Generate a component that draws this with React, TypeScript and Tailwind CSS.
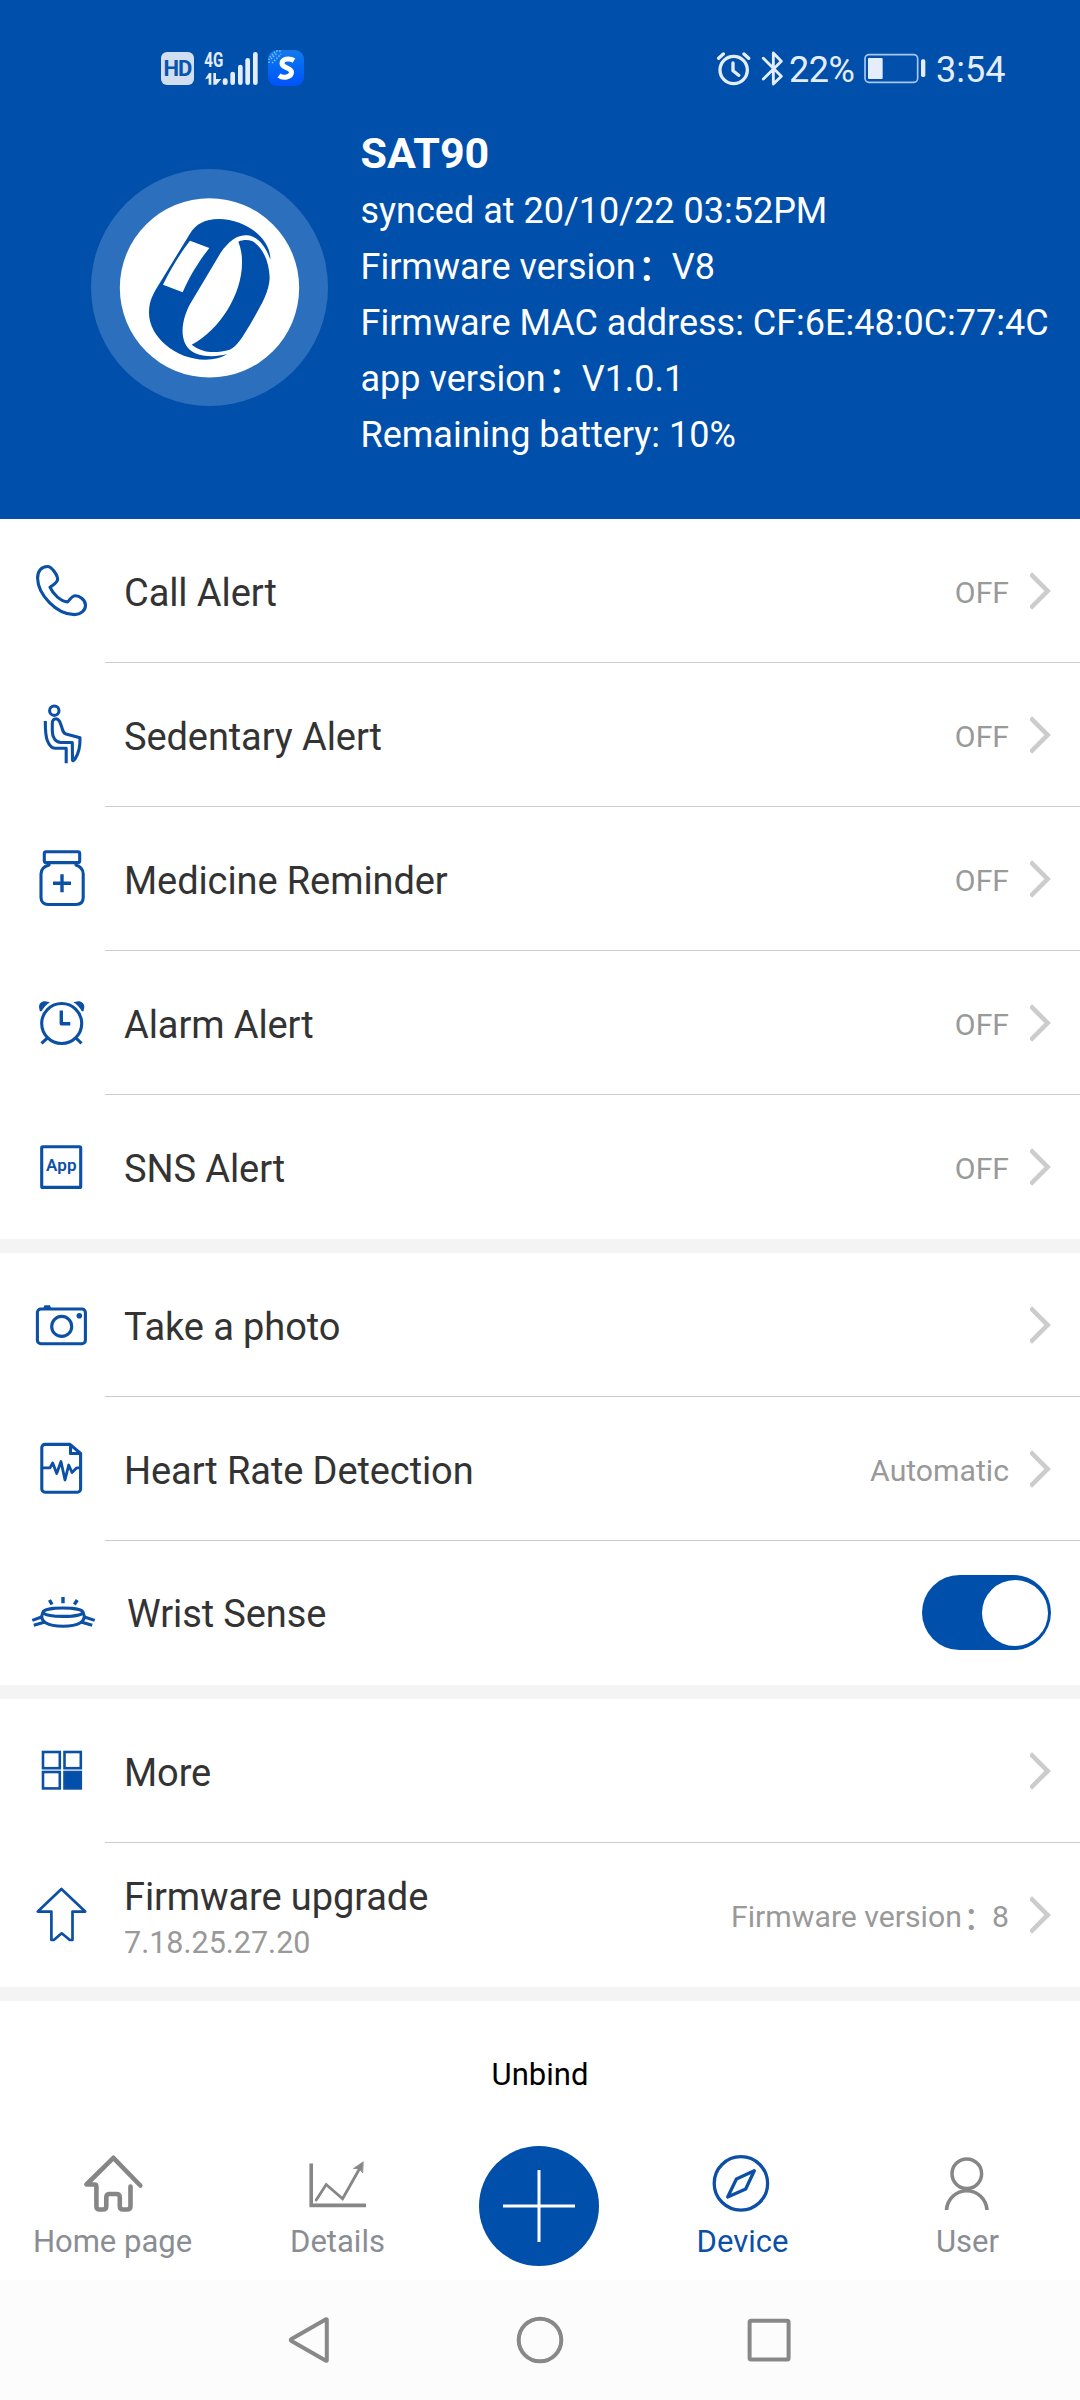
import type { ReactNode } from 'react';

interface MenuItem {
  label: string;
  icon: ReactNode;
  value?: string;
  sub?: string;
  toggle?: boolean;
}

interface TabItem {
  label: string;
  icon: ReactNode;
  active?: boolean;
}

function RowIcon({ children }: { children: ReactNode }) {
  return (
    <svg width="64" height="64" viewBox="0 0 64 64" fill="none" stroke="#0c50a6" strokeWidth="3.1" strokeLinejoin="round" className="shrink-0 overflow-visible">
      {children}
    </svg>
  );
}

const phoneIcon = (
  <RowIcon>
    <path d="M8.6 19.5C8.4 12 12.5 7.5 18.5 7.5C22.5 7.5 28.6 16 28.6 20.3C28.6 23.8 24.5 25.5 21 28.2C24 35.5 32 42.4 38.7 42.9C40.8 41 42.5 36.8 46.5 36.8C50.5 36.8 56.5 41 56.5 46.2C56.5 51.6 51.5 55.6 45.5 55.6C27 55.6 9 35 8.6 19.5Z" />
  </RowIcon>
);

const sittingIcon = (
  <RowIcon>
    <circle cx="25.3" cy="7.7" r="4.7" />
    <path d="M16.3 18C16.3 27 16.5 33 18.3 37.5C20.3 42.5 22.5 45.2 26 45.2H37.2V60.3" />
    <path d="M23.3 28V20C23.3 17.3 25 15.7 27 15.7C30.5 15.7 31.5 20.5 33 25C34 28.5 34.5 30.2 37 31L51 34.8C51.2 42 49.5 51 46 56C45 57.6 43.7 58.3 43.5 57L43.3 39.5H32C26.5 39.5 23.3 34.5 23.3 28Z" />
  </RowIcon>
);

const medicineIcon = (
  <RowIcon>
    <rect x="15.3" y="4.8" width="35.4" height="10.8" rx="1.8" />
    <path d="M20 16V18C14.5 19.5 12 22.5 12 27V50.5C12 55 15 57.5 19 57.5H47C51.5 57.5 54.2 55 54.2 50.5V27C54.2 22.5 51.5 19.5 47 18V16" />
    <path d="M33 27.3V45.3M24 36.3H42" strokeWidth="3.4" />
  </RowIcon>
);

const alarmIcon = (
  <RowIcon>
    <circle cx="32.7" cy="32.5" r="20" />
    <path d="M32.3 19.5V32.7H41.3" strokeWidth="3.4" />
    <path d="M19 46.5L12.5 52.3M46.4 46.5L52.5 52.3" />
    <path d="M21 11.2L16 10.3C12 10.3 10 12.8 10 16L10.8 20.3H12.6C14.5 16.5 17.5 13.5 21 11.2ZM44.4 11.2L49 10.3C53 10.3 55.3 12.8 55.3 16L54.5 20.3H52.8C51 16.5 48 13.5 44.4 11.2Z" fill="#0c50a6" stroke="none" />
  </RowIcon>
);

const appIcon = (
  <RowIcon>
    <rect x="12.7" y="11.8" width="39" height="40.6" rx="1" />
    <text x="17" y="35.7" fontSize="17" fontWeight="600" textLength="30.5" fill="#0c50a6" stroke="none" className="font-[Roboto,sans-serif]">
      App
    </text>
  </RowIcon>
);

const cameraIcon = (
  <RowIcon>
    <rect x="8.4" y="16" width="48" height="34.7" rx="3.5" />
    <path d="M14 16L15.5 12.3H21L22.5 16Z" fill="#0c50a6" stroke="none" />
    <circle cx="32.7" cy="33.4" r="10" />
    <circle cx="50.3" cy="22.7" r="2.8" fill="#0c50a6" stroke="none" />
  </RowIcon>
);

const heartRateIcon = (
  <RowIcon>
    <path d="M41 7.4H16A3.2 3.2 0 0 0 12.8 10.6V52A3.2 3.2 0 0 0 16 55.2H48.4A3.2 3.2 0 0 0 51.6 52V16.5Z" />
    <path d="M41.5 7.5V16.5H51.6" />
    <path d="M13 30.9H21L23.7 26L27.7 36.5L32 24.5L36 43L39.7 28L43 35.5L47.5 30.9H51.5" strokeWidth="2.8" />
  </RowIcon>
);

const wristIcon = (
  <RowIcon>
    <ellipse cx="34" cy="31.2" rx="20" ry="4.2" />
    <path d="M14 31.5C11.5 36 13 39.5 17 42C24 46.3 44 46.3 51 42C55 39.5 56.5 36 54 31.5" />
    <path d="M3.3 39.4L12.5 36M4.8 44.3L16 41M65.7 39.4L55.5 36M63.2 44.3L52 41" />
    <path d="M34 16V22.2M20.5 19L23 23.5M48.3 19L45.3 23.5" strokeWidth="3.4" />
  </RowIcon>
);

const moreIcon = (
  <RowIcon>
    <g strokeWidth="2.6" strokeLinejoin="miter">
      <rect x="14" y="13" width="16.8" height="16.2" />
      <rect x="35.5" y="13" width="16.3" height="16.2" />
      <rect x="14" y="33" width="16.8" height="16.4" />
      <rect x="35.5" y="33" width="16.3" height="16.4" fill="#004fab" />
    </g>
  </RowIcon>
);

const upgradeIcon = (
  <RowIcon>
    <path d="M32.4 6L56.2 28.6H43.5V57H40.8L32.7 50.3L24.8 57H22.4V28.6H8.8Z" strokeWidth="2.7" />
  </RowIcon>
);

const groups: MenuItem[][] = [
  [
    { label: 'Call Alert', icon: phoneIcon, value: 'OFF' },
    { label: 'Sedentary Alert', icon: sittingIcon, value: 'OFF' },
    { label: 'Medicine Reminder', icon: medicineIcon, value: 'OFF' },
    { label: 'Alarm Alert', icon: alarmIcon, value: 'OFF' },
    { label: 'SNS Alert', icon: appIcon, value: 'OFF' },
  ],
  [
    { label: 'Take a photo', icon: cameraIcon },
    { label: 'Heart Rate Detection', icon: heartRateIcon, value: 'Automatic' },
    { label: 'Wrist Sense', icon: wristIcon, toggle: true },
  ],
  [
    { label: 'More', icon: moreIcon },
    { label: 'Firmware upgrade', icon: upgradeIcon, sub: '7.18.25.27.20', value: 'Firmware version：8' },
  ],
];

const deviceInfo = [
  'synced at 20/10/22 03:52PM',
  'Firmware version：V8',
  'Firmware MAC address: CF:6E:48:0C:77:4C',
  'app version：V1.0.1',
  'Remaining battery: 10%',
];

const leftTabs: TabItem[] = [
  {
    label: 'Home page',
    icon: (
      <path d="M59.3 35.5L32.4 7.8L5.4 34.5H13.4Q15.4 34.5 15.4 36.5V56Q15.4 59.5 18.5 59.5H22Q25.3 59.5 25.3 56V47.5Q25.3 44 28.5 44H35.5Q38.8 44 38.8 47.5V56Q38.8 59.5 42 59.5H46Q49.5 59.5 49.5 56V36.5" strokeWidth="4.6" />
    ),
  },
  {
    label: 'Details',
    icon: (
      <>
        <path d="M5.2 13.5V55.4H60" strokeWidth="3.6" strokeLinejoin="miter" strokeLinecap="butt" />
        <path d="M10.2 50L20.2 34.5L36.6 48.8L54.5 17" strokeWidth="2.8" strokeLinejoin="miter" />
        <path d="M57 12L47.5 18.5L53 18.5L56.5 22.5Z" fill="currentColor" strokeWidth="0.8" />
      </>
    ),
  },
];

const rightTabs: TabItem[] = [
  {
    label: 'Device',
    active: true,
    icon: (
      <>
        <circle cx="29.9" cy="33.4" r="26.7" strokeWidth="3.3" />
        <path d="M43.3 20.7L25.4 29L16.7 47L34.7 39Z" strokeWidth="3.3" />
      </>
    ),
  },
  {
    label: 'User',
    icon: (
      <>
        <circle cx="30.8" cy="23.7" r="14.8" strokeWidth="3.5" />
        <path d="M10.5 60A20.3 20.7 0 0 1 51 60" strokeWidth="3.6" strokeLinecap="butt" />
      </>
    ),
  },
];

// The full-width colon sits a little too high and left next to Roboto
function WithColon({ text }: { text: string }) {
  const [before, after] = text.split('：');
  if (after === undefined) return <>{text}</>;
  return (
    <>
      {before}
      <span className="relative top-[2px] left-[2px] font-medium">：</span>
      {after}
    </>
  );
}

function StatusBar() {
  return (
    <div className="flex h-[124px] items-center pt-3 text-[#e4edf9]">
      <div className="ml-[161px] flex h-[33px] w-[33px] items-center justify-center rounded-md bg-[#d0def0] text-[22px] font-bold tracking-[-1px] text-[#0a54ad]">
        HD
      </div>
      <svg width="57" height="38" viewBox="190 54 171 114" className="ml-[9px]" fill="currentColor">
        <text x="194" y="108" fontSize="62" fontWeight="700" textLength="57" lengthAdjust="spacingAndGlyphs">
          4G
        </text>
        <path d="M196 145L208 126H215V161H207V142ZM221 126H229V144H245L230 161H221Z" />
        <rect x="249" y="142" width="15" height="20" rx="7" />
        <rect x="272" y="122" width="14" height="40" rx="7" />
        <rect x="295" y="101" width="14" height="61" rx="7" />
        <rect x="317" y="81" width="14" height="81" rx="7" />
        <rect x="340" y="63" width="14" height="99" rx="7" />
      </svg>
      <div className="ml-2 flex h-9 w-9 items-center justify-center rounded-[9px] bg-linear-to-b from-[#1479ec] to-[#0352fb]">
        <svg width="36" height="36" viewBox="0 0 36 36">
          <path d="M1 13L1 8L8 1H14M4 13L13 4M3 9L9 3" stroke="#7fc0f5" strokeWidth="1.5" strokeDasharray="1.5 1.5" fill="none" />
          <path d="M26 10.5C21 7.5 14 9 14 13.5C14 18.5 24 17 23.5 22.5C23 27.5 15 28.5 11 25.5" stroke="#fff" strokeWidth="5" fill="none" />
        </svg>
      </div>
      <svg width="35" height="36" viewBox="78 60 105 108" fill="none" stroke="currentColor" strokeWidth="10" strokeLinecap="round" strokeLinejoin="round" className="ml-[412px]">
        <circle cx="131" cy="120" r="41" />
        <path d="M129 99V122L146 136M86 85L100 72M176 85L162 72" />
      </svg>
      <svg width="25" height="36" viewBox="210 60 75 108" fill="none" stroke="currentColor" strokeWidth="8.5" strokeLinecap="round" strokeLinejoin="round" className="ml-[9px]">
        <path d="M220 85L274 139L250 162V69L274 94L220 147" />
      </svg>
      <span className="ml-1 w-[74px] pt-[3px] text-[36px] leading-10 tracking-[-0.5px]">22%</span>
      <svg width="64" height="36" viewBox="520 60 192 108" fill="currentColor">
        <rect x="526" y="74" width="158" height="83" rx="12" fill="none" stroke="#a9c8f0" strokeWidth="5" />
        <rect x="535" y="84" width="44" height="63" rx="3" />
        <rect x="694" y="88" width="13" height="53" rx="5" />
      </svg>
      <span className="ml-[9px] pt-[3px] text-[36px] leading-10">3:54</span>
    </div>
  );
}

function BandLogo() {
  return (
    <svg width="237" height="237" viewBox="32 28 711 711" className="mt-[45px] ml-[90.5px] shrink-0">
      <circle cx="387.5" cy="383.5" r="355.5" fill="#2c6fbc" />
      <circle cx="387.5" cy="384.5" r="269" fill="#fff" />
      <g fill="#004fab">
        <path d="M570 300C572 240 500 178 415 178C375 178 347 192 327 225L226 390C211 416 206 435 206 460C206 530 285 600 375 600C400 600 425 594 440 583C400 594 350 592 326 568C298 540 302 485 328 435L420 281C446 242 472 226 500 227C535 230 558 265 570 300Z" />
        <path d="M474 246C490 240 502 240 517 245C550 265 567 310 568 355C566 400 540 440 512 490C485 535 470 560 448 570C405 582 365 580 334 555C420 510 487 400 485 305C485 280 480 262 474 246Z" />
      </g>
      <path d="M329 243L387 265C355 305 325 355 307 398L248 375C270 330 300 280 329 243Z" fill="#fff" />
    </svg>
  );
}

function MenuRow({ item, last }: { item: MenuItem; last: boolean }) {
  return (
    <div className="flex h-36 items-center">
      <div className="flex w-[105px] shrink-0 pl-[29px]">{item.icon}</div>
      <div className={`flex h-full flex-1 items-center justify-between pr-[28px] ${last ? '' : 'border-b border-[#cccccc]'}`}>
        <div className={item.toggle ? 'pt-[2px] pl-[22px]' : item.sub ? 'pt-2 pl-[19px]' : 'pt-1 pl-[19px]'}>
          <div className={`text-[38px] tracking-[-0.1px] text-[#333333] ${item.sub ? 'leading-[46px]' : 'leading-[50px]'}`}>{item.label}</div>
          {item.sub && <div className="text-[30.5px] leading-[45px] text-[#999999]">{item.sub}</div>}
        </div>
        {item.toggle ? (
          <div className="mr-px mb-px flex h-[75px] w-[129px] items-center justify-end rounded-full bg-[#004fab] pr-[3px]">
            <div className="size-[66px] rounded-full bg-white" />
          </div>
        ) : (
          <div className="flex items-center">
            <span className="pt-1 text-[30.2px] leading-10 text-[#999999]">
              <WithColon text={item.value ?? ''} />
            </span>
            <svg width="22" height="40" viewBox="0 0 22 40" fill="none" stroke="#cccccc" strokeWidth="4.6" className="ml-[21px]">
              <path d="M0.5 2.8L17.7 20L0.5 37.2" />
            </svg>
          </div>
        )}
      </div>
    </div>
  );
}

function Tab({ label, icon, active }: TabItem) {
  return (
    <div className={`flex w-[225px] flex-col items-center pt-1 ${active ? 'text-[#0c50a6]' : 'text-[#868686]'}`}>
      <svg width="64" height="64" viewBox="0 0 64 64" fill="none" stroke="currentColor" strokeLinecap="round" strokeLinejoin="round">
        {icon}
      </svg>
      <span className={`mt-2 text-[31px] leading-10 ${active ? '' : 'text-[#8a8d93]'}`}>{label}</span>
    </div>
  );
}

export default function App() {
  return (
    <div className="flex h-[2400px] w-[1080px] flex-col overflow-hidden bg-white font-[Roboto,'Noto_Sans_CJK_SC',sans-serif]">
      <header className="h-[519px] bg-[#004fab] text-white">
        <StatusBar />
        <div className="flex">
          <BandLogo />
          <div className="ml-[33px] whitespace-nowrap">
            <h1 className="text-[43px] leading-[59px] font-bold">SAT90</h1>
            {deviceInfo.map((line) => (
              <p key={line} className="h-14 text-[36px] leading-14">
                <WithColon text={line} />
              </p>
            ))}
          </div>
        </div>
      </header>

      <main>
        {groups.map((items, i) => (
          <section key={i} className="border-b-[14px] border-[#f4f4f4]">
            {items.map((item, j) => (
              <MenuRow key={item.label} item={item} last={j === items.length - 1} />
            ))}
          </section>
        ))}
        <button className="flex h-[145px] w-full items-center justify-center pt-1 text-[31px] text-black">Unbind</button>
      </main>

      <nav className="flex h-[134px] items-start">
        {leftTabs.map((tab) => (
          <Tab key={tab.label} {...tab} />
        ))}
        <div className="w-[180px] pl-[29px]">
          <div className="flex size-[120px] items-center justify-center rounded-full bg-[#004fab]">
            <svg width="72" height="72" viewBox="0 0 72 72" stroke="#fff" strokeWidth="3">
              <path d="M36 0V72M0 36H72" />
            </svg>
          </div>
        </div>
        {rightTabs.map((tab) => (
          <Tab key={tab.label} {...tab} />
        ))}
      </nav>

      <div className="flex h-[120px] items-center bg-[#fcfcfc] pl-[284px]">
        <svg width="48" height="48" viewBox="0 0 48 48" fill="none" stroke="#888" strokeWidth="4" strokeLinejoin="round">
          <path d="M42.8 3.5V44.5Q42.8 45 42 44.7L7.5 25Q6 24 7.5 23L42 3.3Z" />
        </svg>
        <svg width="48" height="48" viewBox="0 0 48 48" fill="none" stroke="#888" strokeWidth="4" className="ml-[184px]">
          <circle cx="24" cy="24" r="21.3" />
        </svg>
        <svg width="48" height="48" viewBox="0 0 48 48" fill="none" stroke="#888" strokeWidth="4" className="ml-[181px]">
          <rect x="4.6" y="4.8" width="39" height="38.6" rx="1.5" />
        </svg>
      </div>
    </div>
  );
}
